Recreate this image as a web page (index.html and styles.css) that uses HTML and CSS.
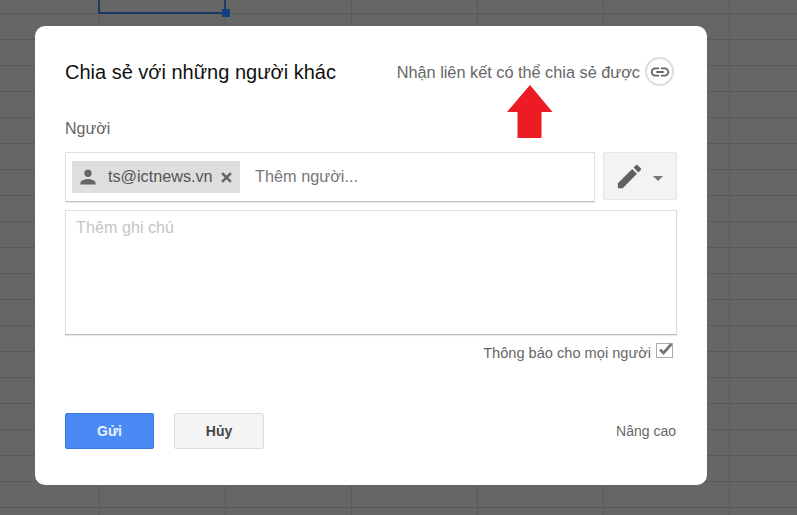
FILE: index.html
```html
<!DOCTYPE html>
<html lang="vi">
<head>
<meta charset="utf-8">
<title>Chia sẻ với những người khác</title>
<link rel="stylesheet" href="styles.css">
</head>
<body>
<div class="sheet-selection"><span class="sheet-handle"></span></div>
<main class="dialog">
  <header class="dialog-head">
    <h1 class="dialog-title">Chia sẻ với những người khác</h1>
    <div class="share-link">
      <span>Nhận liên kết có thể chia sẻ được</span>
      <span class="link-circle">
        <svg width="22" height="22" viewBox="0 0 24 24"><path fill="#666" d="M3.9 12c0-1.71 1.39-3.1 3.1-3.1h4V7H7c-2.76 0-5 2.24-5 5s2.24 5 5 5h4v-1.9H7c-1.71 0-3.1-1.39-3.1-3.1zM8 13h8v-2H8v2zm9-6h-4v1.9h4c1.71 0 3.1 1.39 3.1 3.1s-1.39 3.1-3.1 3.1h-4V17h4c2.76 0 5-2.24 5-5s-2.24-5-5-5z"/></svg>
      </span>
    </div>
  </header>
  <div class="people-label">Người</div>
  <div class="people-row">
    <div class="people-box">
      <span class="chip">
        <svg class="chip-person" width="20" height="20" viewBox="0 0 24 24"><path fill="#666" d="M12 12c2.500 0 4.500-2 4.500-4.500S14.500 3 12 3 7.500 5 7.500 7.500 9.500 12 12 12zm0 2.300c-3 0-9 1.500-9 4.500V21h18v-2.200c0-3-6-4.500-9-4.500z"/></svg>
        <span class="chip-text">ts@ictnews.vn</span>
        <svg class="chip-x" width="11" height="11" viewBox="0 0 10 10"><path d="M1 1l8 8M9 1l-8 8" stroke="#666" stroke-width="2.400" fill="none"/></svg>
      </span>
      <span class="people-placeholder">Thêm người...</span>
    </div>
    <div class="perm-btn">
      <svg width="31" height="31" viewBox="0 0 24 24"><path fill="#616161" d="M3 17.250V21h3.750L17.810 9.940l-3.750-3.750L3 17.250zM20.710 7.040a1 1 0 0 0 0-1.410l-2.340-2.340a1 1 0 0 0-1.410 0l-1.830 1.830 3.750 3.750 1.830-1.830z"/></svg>
      <span class="caret"></span>
    </div>
  </div>
  <div class="note-box">Thêm ghi chú</div>
  <div class="notify-row">
    <span>Thông báo cho mọi người</span>
    <span class="checkbox">
      <svg width="17" height="15" viewBox="0 0 17 15"><path d="M3 7.500l3.500 3.500L14.500 2" stroke="#777" stroke-width="2.800" fill="none"/></svg>
    </span>
  </div>
  <footer class="dialog-foot">
    <button class="btn btn-send" type="button">Gửi</button>
    <button class="btn btn-cancel" type="button">Hủy</button>
    <span class="advanced">Nâng cao</span>
  </footer>
</main>
<svg class="red-arrow" width="48" height="54" viewBox="0 0 48 54"><path fill="#ed1c24" d="M24 0L46.500 27H35.500V53H11.500V27H1z"/></svg>
</body>
</html>
```
FILE: styles.css
```css
html, body {
  margin: 0;
  padding: 0;
  height: 515px;
  overflow: hidden;
}
body {
  position: relative;
  font-family: "Liberation Sans", Arial, sans-serif;
  color: #666;
  background-color: #666;
  background-image:
    linear-gradient(to right, #5a5a5a 1px, transparent 1px),
    linear-gradient(to bottom, #5a5a5a 1px, transparent 1px);
  background-size: 126px 26px;
  background-position: 99px 13px;
  padding-top: 26px;
  box-sizing: border-box;
}
.sheet-selection {
  position: absolute;
  left: 98px;
  top: -4px;
  width: 124px;
  height: 14px;
  border: 2px solid #1c3a63;
}
.sheet-handle {
  position: absolute;
  right: -6px;
  bottom: -5px;
  width: 8px;
  height: 8px;
  background: #123f7d;
}
.dialog {
  width: 612px;
  height: 459px;
  margin-left: 35px;
  padding: 0 30px;
  background: #fff;
  border-radius: 10px;
  display: flex;
  flex-direction: column;
}
.dialog-head {
  display: flex;
  justify-content: space-between;
  align-items: center;
  height: 30px;
  margin-top: 31px;
  margin-right: 3px;
}
.dialog-title {
  margin: 0;
  font-size: 20px;
  font-weight: 400;
  color: #111;
  line-height: 30px;
}
.share-link {
  display: flex;
  align-items: center;
  gap: 5px;
  font-size: 16.300px;
}
.link-circle {
  width: 29px;
  height: 29px;
  margin-top: -1px;
  border: 2px solid #ddd;
  border-radius: 50%;
  display: flex;
  align-items: center;
  justify-content: center;
  box-sizing: border-box;
}
.people-label {
  margin-top: 32px;
  font-size: 16px;
  line-height: 20px;
}
.people-row {
  display: flex;
  gap: 8px;
  margin-top: 13px;
}
.people-box {
  flex: 0 0 530px;
  height: 50px;
  box-sizing: border-box;
  border: 1px solid #e0e0e0;
  border-bottom-color: #c4c4c4;
  box-shadow: 0 1px 1px rgba(0,0,0,.08);
  padding: 8px 6px;
  display: flex;
  align-items: center;
}
.chip {
  display: flex;
  align-items: center;
  height: 32px;
  width: 168px;
  padding-left: 6px;
  background: #dedede;
  box-sizing: border-box;
}
.chip-text {
  margin-left: 10px;
  margin-top: -2px;
  font-size: 16.200px;
  color: #555;
}
.chip-x {
  margin-left: 8px;
}
.people-placeholder {
  margin-left: 15px;
  margin-top: -2px;
  font-size: 16.300px;
  color: #777;
}
.perm-btn {
  width: 74px;
  height: 48px;
  box-sizing: border-box;
  background: #f3f3f3;
  border: 1px solid #e4e4e4;
  border-radius: 2px;
  display: flex;
  align-items: center;
  padding-left: 10px;
  gap: 8px;
}
.caret {
  width: 0;
  height: 0;
  border-left: 5px solid transparent;
  border-right: 5px solid transparent;
  border-top: 5px solid #777;
  margin-top: 4px;
}
.note-box {
  margin-top: 8px;
  width: 612px;
  height: 125px;
  box-sizing: border-box;
  border: 1px solid #e0e0e0;
  border-bottom-color: #bdbdbd;
  box-shadow: 0 1px 1px rgba(0,0,0,.08);
  padding: 7px 10px;
  font-size: 16.200px;
  line-height: 18px;
  color: #c4c4c4;
}
.notify-row {
  display: flex;
  justify-content: flex-end;
  align-items: center;
  gap: 5px;
  height: 20px;
  margin-top: 8px;
  margin-right: 4px;
  font-size: 14.600px;
}
.checkbox {
  width: 15px;
  height: 13px;
  border: 1px solid #aaa;
  margin-top: -6px;
  display: flex;
  align-items: flex-start;
}
.checkbox svg {
  flex: none;
  margin-top: -2px;
}
.dialog-foot {
  display: flex;
  align-items: center;
  margin-top: 50px;
}
.btn {
  height: 36px;
  box-sizing: border-box;
  border-radius: 2px;
  font-family: inherit;
  font-size: 14px;
  font-weight: 700;
  padding: 0;
}
.btn-send {
  width: 89px;
  color: #e8f2ff;
  background: #4a8af4;
  border: 1px solid #3b78e0;
}
.btn-cancel {
  width: 90px;
  margin-left: 20px;
  color: #444;
  background: #f4f4f4;
  border: 1px solid #dcdcdc;
}
.advanced {
  margin-left: auto;
  font-size: 14px;
  padding-right: 1px;
}
.red-arrow {
  position: absolute;
  left: 506px;
  top: 85px;
}
```
